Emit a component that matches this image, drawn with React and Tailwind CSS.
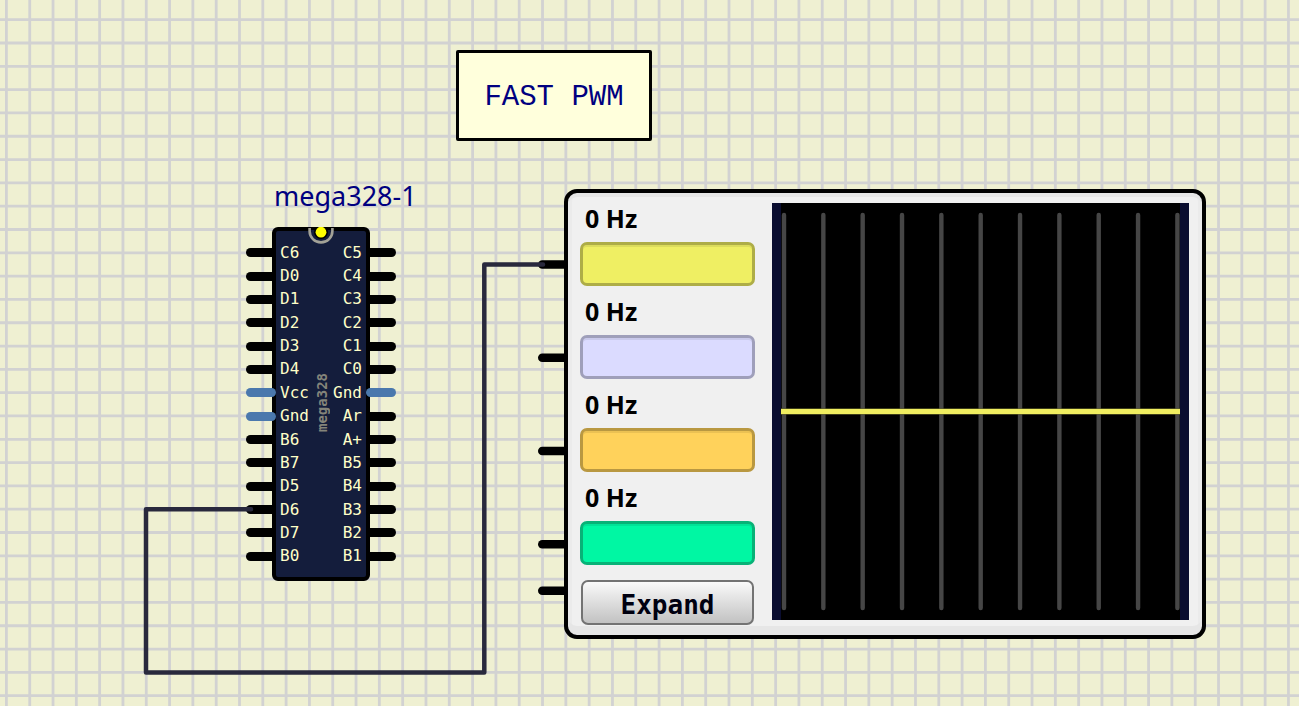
import React from "react";

const leftPins = ["C6", "D0", "D1", "D2", "D3", "D4", "Vcc", "Gnd", "B6", "B7", "D5", "D6", "D7", "B0"];
const rightPins = ["C5", "C4", "C3", "C2", "C1", "C0", "Gnd", "Ar", "A+", "B5", "B4", "B3", "B2", "B1"];

const channels = [
  { name: "Channel 1", style: "bg-[#efef63] border-[#aead47]" },
  { name: "Channel 2", style: "bg-[#dbdbff] border-[#9f9fba]" },
  { name: "Channel 3", style: "bg-[#ffd25b] border-[#b99841]" },
  { name: "Channel 4", style: "bg-[#00f7a3] border-[#08b277]" },
];

const gridLines = Array.from({ length: 120 }, (_, i) => i);

function Grid() {
  return (
    <svg className="absolute inset-0 h-full w-full" stroke="#d2d2d2" strokeWidth="2.8" aria-hidden="true">
      {gridLines.map((i) => (
        <line key={`x${i}`} x1={6.4 + i * 23.31} x2={6.4 + i * 23.31} y1="0" y2="100%" />
      ))}
      {gridLines.map((i) => (
        <line key={`y${i}`} x1="0" x2="100%" y1={19.7 + i * 23.31} y2={19.7 + i * 23.31} />
      ))}
    </svg>
  );
}

function PinBar({ power, side }) {
  return (
    <span
      className={`h-[9px] w-[30px] shrink-0 ${power ? "rounded-full bg-[#4a78ad]" : side === "left" ? "rounded-l-full bg-black" : "rounded-r-full bg-black"}`}
    />
  );
}

function isPower(name) {
  return name === "Vcc" || name === "Gnd";
}

function Chip() {
  return (
    <section className="absolute left-[272px] top-[227px] h-[354px] w-[98px] rounded-md border-4 border-black bg-[#141d3c] pb-[9px] pt-[10px]">
      <h2 className="absolute -top-[55px] left-[-2px] whitespace-nowrap font-['Noto_Sans',sans-serif] text-[27px] leading-10 text-[#000080]">
        mega328-1
      </h2>
      <svg className="absolute -top-1 left-[31px]" width="28" height="18" viewBox="0 0 28 18" aria-hidden="true">
        <path d="M2.6 1V4A11.4 11.4 0 0 0 25.4 4V1" fill="#141d3c" stroke="#a3a297" strokeWidth="2.6" />
        <path d="M4 0H24V3H4Z" fill="#000" />
        <circle cx="14" cy="5" r="7" fill="#000" />
        <circle cx="14" cy="5.2" r="5.4" fill="#ff0" />
      </svg>
      <span className="absolute left-[38px] top-[142px] rotate-180 font-['DejaVu_Sans_Mono',monospace] text-[14px] font-bold leading-4 text-[#84847a] [writing-mode:vertical-rl]">
        mega328
      </span>
      <ul className="-mx-[30px] flex h-full flex-col font-['DejaVu_Sans_Mono',monospace] text-[16px] leading-5 text-[#ffffc8]">
        {leftPins.map((left, i) => {
          const right = rightPins[i];
          return (
            <li key={i} className="flex flex-1 items-center justify-between">
              <span className="flex items-center gap-1">
                <PinBar power={isPower(left)} side="left" />
                {left}
              </span>
              <span className="flex items-center gap-1">
                {right}
                <PinBar power={isPower(right)} side="right" />
              </span>
            </li>
          );
        })}
      </ul>
    </section>
  );
}

function Screen() {
  return (
    <div className="mb-[15px] mt-[10px] flex flex-1 border-x-[9px] border-[#0a0d30] bg-black">
      <svg className="h-full w-full" viewBox="0 0 399 417" preserveAspectRatio="none" aria-hidden="true">
        {Array.from({ length: 11 }, (_, i) => (
          <line key={i} x1={3 + i * 39.34} x2={3 + i * 39.34} y1="12" y2="405" stroke="#464646" strokeWidth="4.4" strokeLinecap="round" />
        ))}
        <line x1="0" x2="399" y1="208.5" y2="208.5" stroke="#000" strokeWidth="7" strokeOpacity="0.5" />
        <line x1="0" x2="399" y1="208.5" y2="208.5" stroke="#f0ee60" strokeWidth="5.6" />
      </svg>
    </div>
  );
}

function Oscilloscope() {
  return (
    <section className="absolute left-[564px] top-[189px] flex h-[450px] w-[642px] gap-[17px] rounded-[13px] border-4 border-black bg-[#f0f0f0] pl-3 pr-[13px] shadow-[inset_0_4px_0_#e6e6e6,inset_0_-9px_0_#e6e6e6,inset_4px_0_0_#ebebeb,inset_-4px_0_0_#ebebeb]">
      <div className="flex w-[175px] flex-col pb-[10px]">
        {channels.map((c) => (
          <div key={c.name} className="flex flex-1 flex-col">
            <output className="flex flex-1 items-center pl-[5px] pt-px font-['Noto_Sans',sans-serif] text-[25px] font-bold leading-8 text-black">
              0 Hz
            </output>
            <button
              type="button"
              aria-label={c.name}
              className={`h-11 rounded-[7px] border-[3px] shadow-[inset_0_2px_0_rgba(0,0,0,0.08)] ${c.style}`}
            />
          </div>
        ))}
        <button
          type="button"
          className="mx-px mt-[15px] h-[45px] rounded-[7px] border-2 border-[#737373] bg-linear-to-b from-[#fafafa] to-[#c2c2c2] pt-1 font-['DejaVu_Sans_Mono',monospace] text-[26px] font-bold leading-8 text-[#000010]"
        >
          Expand
        </button>
      </div>
      <Screen />
    </section>
  );
}

function Wires() {
  return (
    <svg className="pointer-events-none absolute left-0 top-0" width="600" height="700" aria-hidden="true">
      {[264.5, 357.7, 451, 544.2, 590.8].map((y) => (
        <path key={y} d={`M566 ${y - 4.3}H542.3a4.3 4.3 0 0 0 0 8.6H566Z`} fill="#000" />
      ))}
      <path
        d="M543 264.5H484.3V672.4H146V509.3H251"
        fill="none"
        stroke="#29293d"
        strokeWidth="4.5"
        strokeLinecap="round"
        strokeLinejoin="round"
      />
    </svg>
  );
}

export default function App() {
  return (
    <main className="relative min-h-screen w-full overflow-hidden bg-[#eff0d2]">
      <Grid />
      <h1 className="absolute left-[456px] top-[50px] flex h-[91px] w-[196px] items-center justify-center rounded-xs border-[3px] border-black bg-[#ffffdc] pt-1 font-['Liberation_Mono',monospace] text-[29px] leading-8 text-[#000080]">
        FAST PWM
      </h1>
      <Chip />
      <Oscilloscope />
      <Wires />
    </main>
  );
}
